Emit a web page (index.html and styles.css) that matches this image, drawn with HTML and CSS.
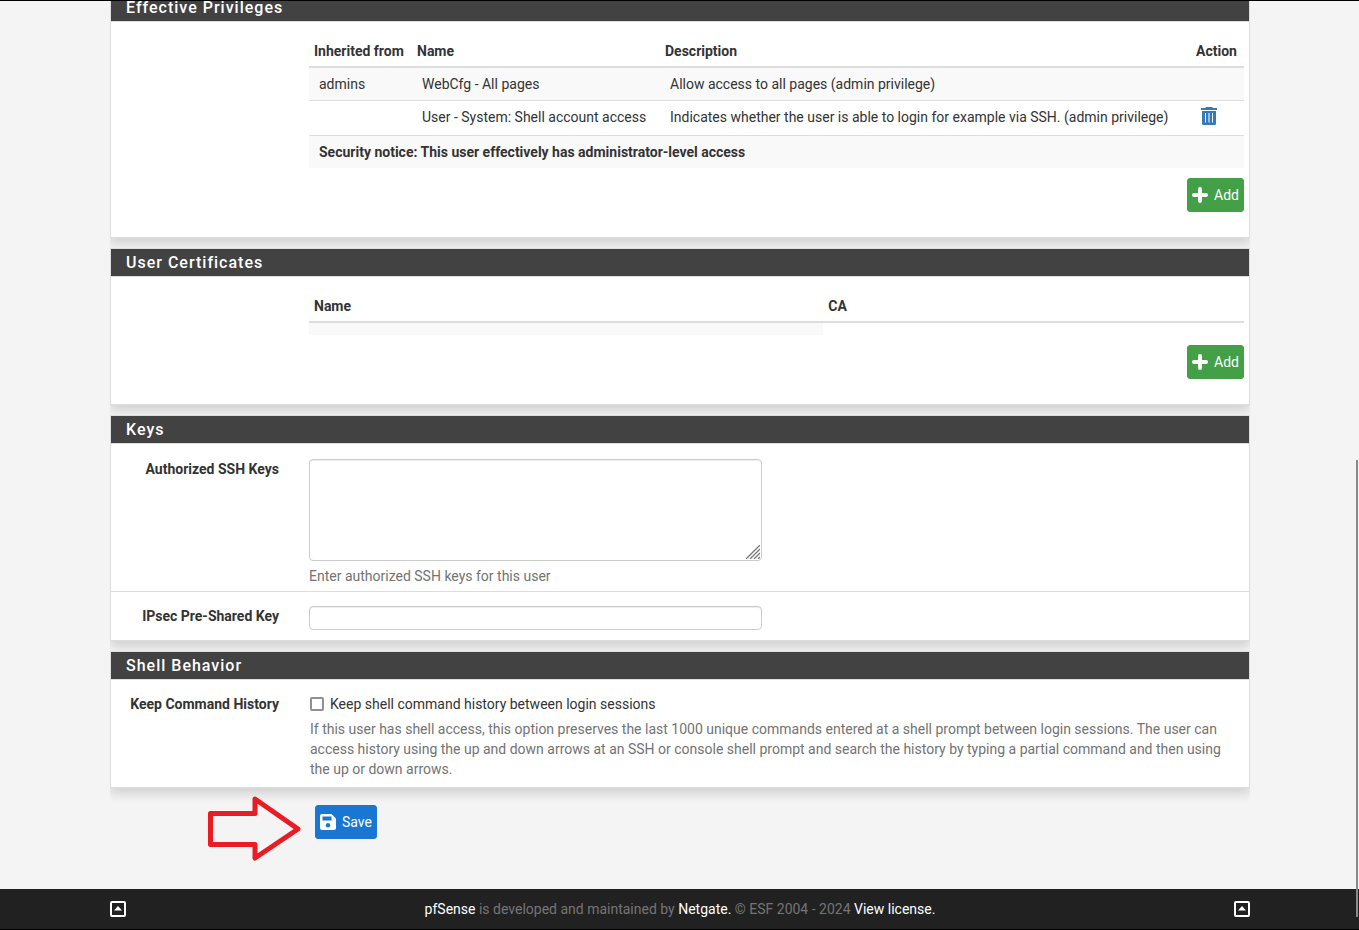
FILE: index.html
```html
<!DOCTYPE html>
<html lang="en">
<head>
<meta charset="utf-8">
<title>pfSense - User Manager</title>
<link rel="stylesheet" href="styles.css">
</head>
<body>
<div class="window-edge"></div>
<div class="scroll-thumb"></div>
<main class="container">
  <form class="form">
    <section class="panel">
      <h2 class="panel-heading">Effective Privileges</h2>
      <div class="panel-table">
        <table class="table">
          <thead>
            <tr><th class="col-from">Inherited from</th><th class="col-priv">Name</th><th>Description</th><th class="col-action">Action</th></tr>
          </thead>
          <tbody>
            <tr><td>admins</td><td>WebCfg - All pages</td><td>Allow access to all pages (admin privilege)</td><td></td></tr>
            <tr><td></td><td>User - System: Shell account access</td><td>Indicates whether the user is able to login for example via SSH. (admin privilege)</td>
              <td><a class="trash" href="#" aria-label="Delete privilege"><svg width="16" height="18" viewBox="0 0 16 18"><path fill="currentColor" fill-rule="evenodd" d="M5 0h6l1 1h4v2H0V1h4zM1 4h14v12.500q0 1.500-1.500 1.500h-11Q1 18 1 16.500zM4 6v9.500h1V6zM7.500 6v9.500h1V6zM11 6v9.500h1V6z"/></svg></a></td></tr>
            <tr><td colspan="4"><b>Security notice: This user effectively has administrator-level access</b></td></tr>
          </tbody>
        </table>
        <nav class="actions">
          <button type="button" class="btn btn-success"><svg width="16" height="16" viewBox="0 0 16 16"><path stroke="currentColor" stroke-width="4" stroke-linecap="round" d="M8 2v12M2 8h12"/></svg>Add</button>
        </nav>
      </div>
    </section>

    <section class="panel">
      <h2 class="panel-heading">User Certificates</h2>
      <div class="panel-table">
        <table class="table">
          <thead>
            <tr><th class="col-cert">Name</th><th>CA</th></tr>
          </thead>
          <tbody>
            <tr><td></td></tr>
          </tbody>
        </table>
        <nav class="actions">
          <button type="button" class="btn btn-success"><svg width="16" height="16" viewBox="0 0 16 16"><path stroke="currentColor" stroke-width="4" stroke-linecap="round" d="M8 2v12M2 8h12"/></svg>Add</button>
        </nav>
      </div>
    </section>

    <section class="panel">
      <h2 class="panel-heading">Keys</h2>
      <div class="form-group form-group-ssh">
        <label class="control-label" for="sshkeys">Authorized SSH Keys</label>
        <div class="field">
          <div class="textarea-wrap">
            <textarea class="control control-area" id="sshkeys"></textarea>
            <svg class="grip" width="14" height="14" viewBox="0 0 14 14"><path stroke="#77777c" stroke-width="1.300" d="M0 14L14 0M4 14L14 4M8 14L14 8M12 14L14 12"/></svg>
          </div>
          <p class="help">Enter authorized SSH keys for this user</p>
        </div>
      </div>
      <div class="form-group form-group-psk">
        <label class="control-label" for="psk">IPsec Pre-Shared Key</label>
        <div class="field"><input class="control control-text" id="psk" type="text"></div>
      </div>
    </section>

    <section class="panel">
      <h2 class="panel-heading">Shell Behavior</h2>
      <div class="form-group form-group-shell">
        <span class="control-label">Keep Command History</span>
        <div class="field field-check">
          <label class="check"><input type="checkbox">Keep shell command history between login sessions</label>
          <p class="help">If this user has shell access, this option preserves the last 1000 unique commands entered at a shell prompt between login sessions. The user can access history using the up and down arrows at an SSH or console shell prompt and search the history by typing a partial command and then using the up or down arrows.</p>
        </div>
      </div>
    </section>

    <div class="save-row">
      <svg class="arrow" width="94" height="66" viewBox="0 0 94 66"><path fill="none" stroke="#e91c24" stroke-width="5" stroke-linejoin="round" d="M2.500 17.500H47V3L90 33 47 62V48.500H2.500z"/></svg>
      <button type="submit" class="btn btn-primary"><svg width="16" height="16" viewBox="0 0 16 16"><path fill="currentColor" fill-rule="evenodd" d="M2 0h9.500L16 4.500V14q0 2-2 2H2q-2 0-2-2V2q0-2 2-2zM2.500 2.500v4h9v-4zM8 9a2.300 2.300 0 1 0 0 4.600A2.300 2.300 0 1 0 8 9z"/></svg>Save</button>
    </div>
  </form>
</main>
<footer class="footer">
  <div class="footer-inner">
    <a href="#" aria-label="Back to top"><svg width="16" height="16" viewBox="0 0 16 16"><rect x="1" y="1" width="14" height="14" rx="1" fill="none" stroke="currentColor" stroke-width="2"/><path fill="currentColor" d="M8 5l4 4.500H4z"/></svg></a>
    <span><a href="#">pfSense</a> is developed and maintained by <a href="#">Netgate.</a> © ESF 2004 - 2024 <a href="#">View license.</a></span>
    <a href="#" aria-label="Back to top"><svg width="16" height="16" viewBox="0 0 16 16"><rect x="1" y="1" width="14" height="14" rx="1" fill="none" stroke="currentColor" stroke-width="2"/><path fill="currentColor" d="M8 5l4 4.500H4z"/></svg></a>
  </div>
</footer>
</body>
</html>
```
FILE: styles.css
```css
* { box-sizing: border-box; }

body {
  margin: 0;
  padding: 0;
  min-height: 100vh;
  display: flex;
  flex-direction: column;
  background: #f4f4f4;
  color: #333;
  font: 14px/20px Roboto, "Liberation Sans", sans-serif;
}

svg { display: block; flex: none; }
p { margin: 0; }
a { text-decoration: none; }

.window-edge {
  position: fixed;
  inset: 0 0 auto;
  height: 1px;
  background: #000;
  z-index: 2;
}

.scroll-thumb {
  position: fixed;
  top: 460px;
  right: 1px;
  bottom: 13px;
  width: 2px;
  background: #8a8a8a;
  z-index: 2;
}

.container, .footer-inner {
  width: 100%;
  max-width: 1141px;
  margin: 0 auto;
  padding-left: 1px;
}

/* The page is scrolled so the first heading is partly out of view. */
.container { margin-top: -7px; }

.form {
  display: flex;
  flex-direction: column;
  gap: 10px;
}

.panel {
  background: #fff;
  border: 1px solid #ddd;
  box-shadow: 0 6px 10px rgba(0, 0, 0, 0.14);
  clip-path: inset(0 0 -16px 0);
}

.panel-heading {
  margin: 0;
  padding: 4px 15px 3px;
  background: #424242;
  border-bottom: 1px solid #ddd;
  color: #fff;
  font-size: 16px;
  font-weight: 500;
  line-height: 20px;
  letter-spacing: 1px;
}

.panel-table { padding: 14px 5px 25px 198px; }

.table {
  width: 100%;
  border-collapse: separate;
  border-spacing: 0;
}

.table th {
  padding: 5px;
  border-bottom: 2px solid #ddd;
  text-align: left;
  font-weight: 700;
}

.table td { padding: 6px 10px; vertical-align: top; }
.table tr + tr td { border-top: 1px solid #ddd; }
.table tbody tr:nth-child(odd) td { background: #f9f9f9; }

.col-from { width: 103px; white-space: nowrap; }
.col-priv { width: 248px; }
.col-action { width: 53px; }
.col-cert { width: 55%; }

.trash {
  display: flex;
  align-items: center;
  height: 22px;
  padding-bottom: 4px;
  color: #337ab7;
}

.actions {
  display: flex;
  justify-content: flex-end;
  margin-top: 10px;
}

.btn {
  display: flex;
  align-items: center;
  gap: 6px;
  height: 34px;
  padding: 0 4px;
  border: 1px solid;
  border-radius: 3px;
  color: #fff;
  font: inherit;
}

.btn-success { background: #43a047; border-color: #43a047; color: #fff; }
.btn-primary { background: #1976d2; border-color: #1976d2; color: #fff; }

.form-group {
  display: grid;
  grid-template-columns: 198px 1fr;
  padding: 14px 0 5px;
}

.form-group-ssh { padding-top: 15px; }

.form-group-psk {
  padding-bottom: 10px;
  border-top: 1px solid #ddd;
}

.form-group-shell { padding-bottom: 8px; }

.control-label {
  padding-right: 30px;
  text-align: right;
  font-weight: 700;
}

.field { padding-right: 15px; }
.field-check { padding-left: 1px; }

.textarea-wrap {
  position: relative;
  max-width: 453px;
}

.control {
  display: block;
  width: 100%;
  max-width: 453px;
  padding: 2px 6px;
  background: #fff;
  border: 1px solid #ccc;
  border-radius: 4px;
  box-shadow: inset 0 1px 1px rgba(0, 0, 0, 0.075);
  font: inherit;
}

.control-area { height: 102px; resize: none; }
.control-text { height: 24px; }

.grip {
  position: absolute;
  right: 2px;
  bottom: 2px;
}

.help { margin-top: 5px; color: #737373; }

.check {
  display: flex;
  align-items: center;
  gap: 6px;
}

.check input {
  appearance: none;
  width: 14px;
  height: 14px;
  margin: 0;
  border: 2px solid #8f8f9d;
  border-radius: 2px;
  background: #fff;
}

.save-row {
  position: relative;
  padding: 7px 0 50px 205px;
}

.arrow {
  position: absolute;
  left: 98px;
  top: -2px;
}

.footer {
  margin-top: auto;
  padding: 10px 0;
  background: #212121;
  border-bottom: 1px solid #000;
  color: #757575;
}

.footer a { color: #fff; }

.footer-inner {
  display: flex;
  align-items: center;
  justify-content: space-between;
}
```
